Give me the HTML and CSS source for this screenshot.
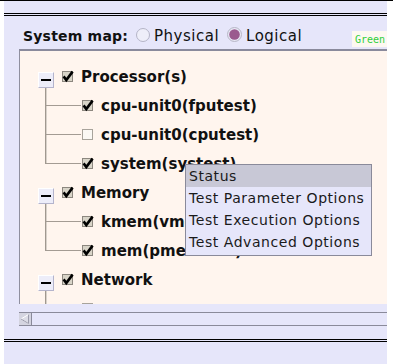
FILE: index.html
```html
<!DOCTYPE html>
<html lang="en">
<head>
    <meta charset="UTF-8">
    <title>System map</title>
    <link rel="stylesheet" href="styles.css">
</head>
<body>
    <div class="topline"></div>
    <div class="frame">
        <div class="rule"></div>
        <div class="mapbar">
            <span class="map-title">System map:</span>
            <label class="opt">
                <svg class="radio" width="14" height="14" viewBox="0 0 14 14"><circle cx="7" cy="7" r="6.5" fill="#eeeef9" stroke="#b4b4c6"/></svg>
                <span>Physical</span>
            </label>
            <label class="opt">
                <svg class="radio" width="15" height="15" viewBox="0 0 15 15"><circle cx="7.5" cy="7.5" r="7" fill="#e8e8f5" stroke="#b6b6c6"/><circle cx="7.5" cy="7.5" r="5.3" fill="#9a5a8e"/></svg>
                <span>Logical</span>
            </label>
            <span class="status-tag">Green</span>
        </div>

        <div class="panel">
            <div class="tree">
                <div class="node">
                    <div class="row">
                        <div class="toggle-col"><span class="toggle"></span><span class="stub"></span></div>
                        <span class="check on"><svg width="12" height="12" viewBox="0 0 12 12"><polyline points="1.6,5.4 4.3,9 10.6,0.6" /></svg></span>
                        <span class="label">Processor(s)</span>
                    </div>
                    <div class="kids">
                        <div class="row kid">
                            <span class="branch"><span class="up"></span><span class="down"></span></span>
                            <span class="check on"><svg width="12" height="12" viewBox="0 0 12 12"><polyline points="1.6,5.4 4.3,9 10.6,0.6" /></svg></span>
                            <span class="label">cpu-unit0(fputest)</span>
                        </div>
                        <div class="row kid">
                            <span class="branch"><span class="up"></span><span class="down"></span></span>
                            <span class="check"></span>
                            <span class="label">cpu-unit0(cputest)</span>
                        </div>
                        <div class="row kid last">
                            <span class="branch"><span class="up"></span><span class="down"></span></span>
                            <span class="check on"><svg width="12" height="12" viewBox="0 0 12 12"><polyline points="1.6,5.4 4.3,9 10.6,0.6" /></svg></span>
                            <span class="label">system(systest)</span>
                        </div>
                    </div>
                </div>

                <div class="node">
                    <div class="row">
                        <div class="toggle-col"><span class="toggle"></span><span class="stub"></span></div>
                        <span class="check on"><svg width="12" height="12" viewBox="0 0 12 12"><polyline points="1.6,5.4 4.3,9 10.6,0.6" /></svg></span>
                        <span class="label">Memory</span>
                    </div>
                    <div class="kids">
                        <div class="row kid">
                            <span class="branch"><span class="up"></span><span class="down"></span></span>
                            <span class="check on"><svg width="12" height="12" viewBox="0 0 12 12"><polyline points="1.6,5.4 4.3,9 10.6,0.6" /></svg></span>
                            <span class="label">kmem(vmemtest)</span>
                        </div>
                        <div class="row kid last">
                            <span class="branch"><span class="up"></span><span class="down"></span></span>
                            <span class="check on"><svg width="12" height="12" viewBox="0 0 12 12"><polyline points="1.6,5.4 4.3,9 10.6,0.6" /></svg></span>
                            <span class="label">mem(pmemtest)</span>
                        </div>
                    </div>
                </div>

                <div class="node">
                    <div class="row">
                        <div class="toggle-col"><span class="toggle"></span><span class="stub"></span></div>
                        <span class="check on"><svg width="12" height="12" viewBox="0 0 12 12"><polyline points="1.6,5.4 4.3,9 10.6,0.6" /></svg></span>
                        <span class="label">Network</span>
                    </div>
                    <div class="kids">
                        <div class="row kid">
                            <span class="branch"><span class="up"></span><span class="down"></span></span>
                            <span class="check"></span>
                        </div>
                    </div>
                </div>
            </div>

            <ul class="menu">
                <li class="active">Status</li>
                <li>Test Parameter Options</li>
                <li>Test Execution Options</li>
                <li>Test Advanced Options</li>
            </ul>
        </div>

        <div class="hscroll">
            <span class="arrow">
                <svg width="12" height="12" viewBox="0 0 12 12"><polygon points="9.5,1.5 9.5,10.5 2,6" fill="#dcdce6" stroke="#ffffff"/><polyline points="9.5,1.5 9.5,10.5 2,6" fill="none" stroke="#9a9aaa"/></svg>
            </span>
            <span class="track"></span>
        </div>
        <div class="rule bottom"></div>
    </div>
</body>
</html>
```

FILE: styles.css
```css
body {
    margin: 0;
    background: #ffffff;
    font-family: 'DejaVu Sans', sans-serif;
    color: #111111;
}
.topline {
    height: 1px;
    background: #000000;
}
.frame {
    margin-left: 4px;
    width: 383px;
    height: 363px;
    background: #e6e6fa;
    overflow: hidden;
}
.rule {
    margin-top: 12px;
    height: 1px;
    border-top: 1px solid #000000;
    border-bottom: 1px solid #000000;
}
.rule.bottom {
    margin-top: 13px;
}
.mapbar {
    height: 33px;
    box-sizing: border-box;
    padding: 7px 0 0 19px;
    display: flex;
    align-items: center;
    font-size: 15px;
}
.map-title {
    font-weight: bold;
    font-size: 14px;
    letter-spacing: 0.2px;
}
.opt {
    display: flex;
    align-items: center;
    gap: 4px;
    margin-left: 8px;
    letter-spacing: 0.5px;
}
.radio {
    margin-top: -3px;
}
.status-tag {
    margin-left: auto;
    align-self: flex-end;
    margin-bottom: 2px;
    width: 35px;
    height: 16px;
    box-sizing: border-box;
    padding: 4px 0 0 3px;
    background: #fdf8f1;
    font-family: 'DejaVu Sans Mono', monospace;
    font-size: 10px;
    line-height: 10px;
    color: #2fcf3a;
}
.panel {
    position: relative;
    margin-left: 15px;
    height: 255px;
    box-sizing: border-box;
    border-top: 2px solid #8a8a9c;
    border-left: 1px solid #8f8f9f;
    background: #fff5ee;
    overflow: hidden;
}
.tree {
    padding-top: 11px;
}
.row {
    display: flex;
    align-items: center;
    height: 29px;
}
.toggle-col {
    display: flex;
    flex-direction: column;
    align-items: center;
    align-self: stretch;
    width: 16px;
    margin-left: 18px;
    padding-top: 10px;
}
.toggle {
    width: 16px;
    height: 16px;
    box-sizing: border-box;
    border: 1px solid #ffffff;
    border-right-color: #b4b4cc;
    border-bottom-color: #b4b4cc;
    background: #ededf9;
    display: flex;
    align-items: center;
    justify-content: center;
}
.toggle::before {
    content: "";
    width: 10px;
    height: 2px;
    background: #000000;
}
.stub {
    flex: 1;
    width: 2px;
    background: linear-gradient(to right, #a0988f 50%, #d8d1ca 50%);
}
.check {
    width: 11px;
    height: 11px;
    box-sizing: border-box;
    margin-left: 8px;
    border: 1px solid #a8a39b;
    background: #fbf8f4;
    position: relative;
}
.check.on {
    border-color: #8c877f;
    background: #d8d4c8;
}
.check svg {
    position: absolute;
    left: -1px;
    top: -1px;
    overflow: visible;
}
.check polyline {
    fill: none;
    stroke: #000000;
    stroke-width: 2.6;
}
.label {
    margin-left: 8px;
    font-size: 15px;
    font-weight: bold;
    white-space: nowrap;
}
.kid {
    padding-left: 25px;
    align-items: stretch;
}
.kid .check,
.kid .label {
    align-self: center;
}
.kid .check {
    margin-left: 1px;
}
.branch {
    display: flex;
    flex-direction: column;
    width: 36px;
}
.branch .up {
    height: 15px;
    box-sizing: border-box;
    border-left: 1px solid #a0988f;
    border-bottom: 1px solid #a39b93;
    box-shadow: inset 1px 0 #d8d1ca;
}
.branch .down {
    flex: 1;
    border-left: 1px solid #a0988f;
    box-shadow: inset 1px 0 #d8d1ca;
}
.kid.last .down {
    border-left-color: transparent;
    box-shadow: none;
}
.menu {
    position: absolute;
    left: 165px;
    top: 113px;
    width: 187px;
    box-sizing: border-box;
    margin: 0;
    padding: 0 0 2px;
    list-style: none;
    border: 1px solid #8a8a9a;
    background: #e6e6fa;
    font-size: 14px;
    letter-spacing: 0.55px;
    color: #1a1a1a;
}
.menu li {
    height: 22px;
    line-height: 22px;
    padding-left: 3px;
}
.menu li.active {
    background: #c8c8d6;
}
.hscroll {
    display: flex;
    margin: 8px 0 0 15px;
    height: 14px;
    box-sizing: border-box;
    border-top: 1px solid #8a8a9a;
    border-bottom: 1px solid #8a8a9a;
}
.arrow {
    width: 12px;
    background: #d4d4e0;
    border-right: 1px solid #8a8a9a;
}
.arrow svg {
    display: block;
}
.track {
    flex: 1;
}
```
